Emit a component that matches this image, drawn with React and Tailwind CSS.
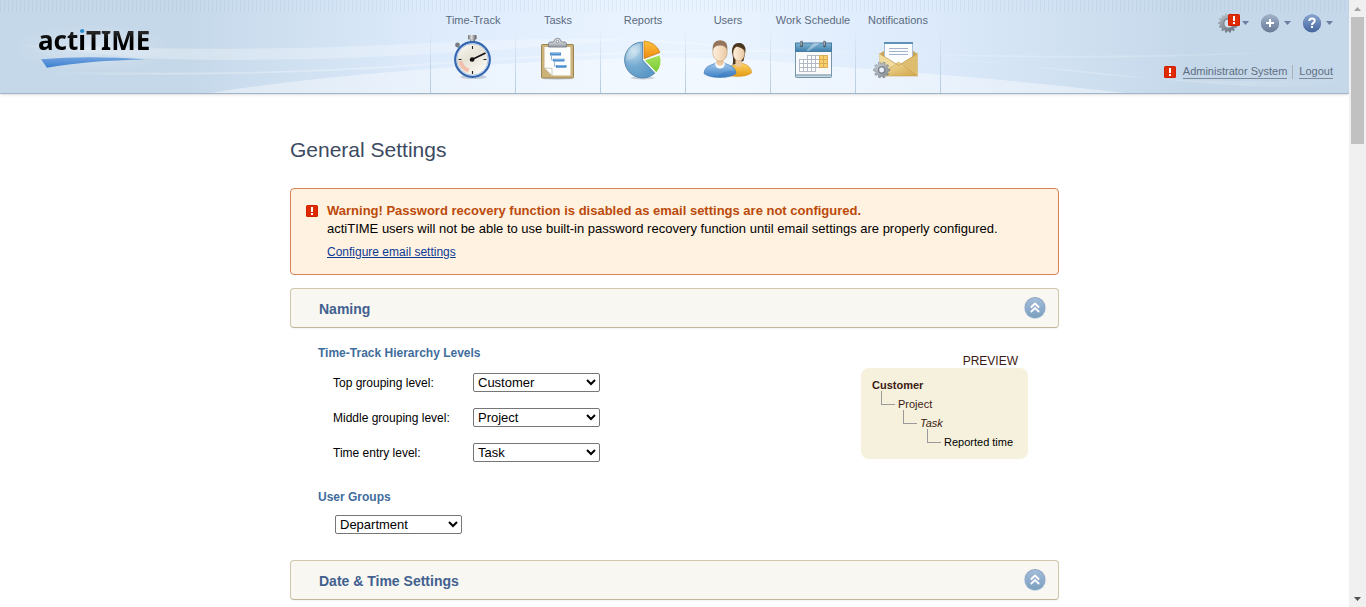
import React from "react";

const calendarCells = [];
for (let row = 0; row < 4; row++) {
  for (let col = 0; col < 7; col++) {
    if ((row === 0 && col < 2) || (row === 3 && col > 3)) continue;
    calendarCells.push({ x: 11 + col * 4, y: 21 + row * 4, weekend: col > 4 });
  }
}

function gearPath(cx, cy, outer, inner, teeth) {
  const points = [];
  const step = (Math.PI * 2) / teeth;
  for (let i = 0; i < teeth; i++) {
    const a = i * step;
    [
      [inner, -0.32],
      [outer, -0.2],
      [outer, 0.2],
      [inner, 0.32],
    ].forEach(([r, t]) => {
      points.push(
        (cx + r * Math.cos(a + t * step)).toFixed(2) + " " + (cy + r * Math.sin(a + t * step)).toFixed(2)
      );
    });
  }
  return "M" + points.join("L") + "Z";
}

function StopwatchIcon() {
  return (
    <svg viewBox="0 0 50 48" className="h-12 w-[50px]" aria-hidden="true">
      <defs>
        <linearGradient id="swFace" x1="0" y1="0" x2="0.6" y2="1">
          <stop offset="0" stopColor="#fffefa" />
          <stop offset="0.5" stopColor="#e6e3d6" />
          <stop offset="1" stopColor="#fbfaf4" />
        </linearGradient>
        <linearGradient id="swMetal" x1="0" x2="1">
          <stop offset="0" stopColor="#6d6d6d" />
          <stop offset="0.4" stopColor="#dedede" />
          <stop offset="1" stopColor="#555" />
        </linearGradient>
      </defs>
      <ellipse cx="25.5" cy="43" rx="13" ry="2" fill="#9aa7b5" opacity="0.5" />
      <rect x="22" y="4" width="5" height="5" fill="url(#swMetal)" />
      <rect x="20" y="1" width="8.500" height="4.500" rx="0.800" fill="url(#swMetal)" />
      <circle cx="9.500" cy="11" r="2.400" fill="#777c82" />
      <path d="M10 12L13 15" stroke="#8b8f94" strokeWidth="2" />
      <circle cx="24.500" cy="25.500" r="17.300" fill="url(#swFace)" stroke="#3567b0" strokeWidth="2.200" />
      <circle cx="24.500" cy="25.500" r="15.700" fill="none" stroke="#a9c4e6" strokeWidth="0.900" />
      <path d="M10.500 27A14 14 0 0 0 20 38.500L21.500 34.500A10 10 0 0 1 14.500 27Z" fill="#f4b9a4" opacity="0.850" />
      <path d="M24.500 12v3M24.500 37v3M10.500 25.500h3M35.500 25.500h3" stroke="#222" strokeWidth="1.100" />
      <path d="M22 26.500L37.500 19" stroke="#111" strokeWidth="1.500" />
      <circle cx="24.200" cy="25.500" r="2.300" fill="#111" />
    </svg>
  );
}

function TasksIcon() {
  return (
    <svg viewBox="0 0 50 48" className="h-12 w-[50px]" aria-hidden="true">
      <defs>
        <linearGradient id="clipMetal" x1="0" y1="0" x2="0" y2="1">
          <stop offset="0" stopColor="#fafafa" />
          <stop offset="1" stopColor="#969ca3" />
        </linearGradient>
      </defs>
      <ellipse cx="24.500" cy="44.500" rx="15" ry="1.200" fill="#9aa7b5" opacity="0.500" />
      <rect x="8.500" y="10.500" width="32" height="33.500" rx="0.800" fill="#cbb278" stroke="#9c8453" />
      <path d="M11.500 13H37.500V41.500H19L11.500 34Z" fill="#fcfcfd" />
      <path d="M11.500 34L19 34.500L19 41.500Z" fill="#fff" stroke="#b9b39c" strokeWidth="0.700" />
      <path d="M17 20h11M20 26.200h11.500M23 32.300h10.500" stroke="#4b8ccc" strokeWidth="2.800" />
      <path d="M18 19.300h9M21 25.500h9.500M24 31.600h8.500" stroke="#8dbce8" strokeWidth="0.800" />
      <path d="M18.500 21.500v4.500H20M21.500 27.700v4.500H23" fill="none" stroke="#8bb0d4" strokeWidth="0.900" />
      <path d="M15.500 13V9.500Q15.500 8 18 8H20.500Q21.500 4.300 24.500 4.300T28.500 8H31Q33.500 8 33.500 9.500V13Z" fill="url(#clipMetal)" stroke="#767d86" strokeWidth="0.900" />
      <circle cx="24.500" cy="7.500" r="1.300" fill="#fff" stroke="#777f88" strokeWidth="0.800" />
    </svg>
  );
}

function ReportsIcon() {
  return (
    <svg viewBox="0 0 50 48" className="h-12 w-[50px]" aria-hidden="true">
      <defs>
        <radialGradient id="pieBlue" cx="0.300" cy="0.250" r="0.800">
          <stop offset="0" stopColor="#c5dfef" />
          <stop offset="0.550" stopColor="#73a9cf" />
          <stop offset="1" stopColor="#5b98c8" />
        </radialGradient>
        <linearGradient id="pieOrange" x1="0" y1="0" x2="0" y2="1">
          <stop offset="0" stopColor="#ffc13c" />
          <stop offset="1" stopColor="#ee8a13" />
        </linearGradient>
        <linearGradient id="pieGreen" x1="0" y1="0" x2="0" y2="1">
          <stop offset="0" stopColor="#a6e35e" />
          <stop offset="1" stopColor="#78c832" />
        </linearGradient>
      </defs>
      <ellipse cx="24.500" cy="44" rx="12" ry="1.500" fill="#9aa7b5" opacity="0.500" />
      <path d="M24.500 26V8A18 18 0 1 0 36.800 39.200Z" fill="url(#pieBlue)" stroke="#4c7ca5" strokeWidth="0.800" />
      <path d="M22 10A15.500 15.500 0 0 0 8.500 27Q17 25 22 18Z" fill="#fff" opacity="0.220" />
      <path d="M26 24.700V7A18 18 0 0 1 42 18.500Z" fill="url(#pieOrange)" stroke="#c67a16" strokeWidth="0.700" />
      <path d="M26.300 26L42 20.800A18 18 0 0 1 38.300 38.800Z" fill="url(#pieGreen)" stroke="#fff" strokeWidth="0.900" />
    </svg>
  );
}

function UsersIcon() {
  return (
    <svg viewBox="0 0 50 48" className="h-12 w-[50px]" aria-hidden="true">
      <defs>
        <linearGradient id="skin" x1="0" x2="1">
          <stop offset="0" stopColor="#fff0df" />
          <stop offset="1" stopColor="#e9c9a4" />
        </linearGradient>
        <linearGradient id="shirtBlue" x1="0" y1="0" x2="0" y2="1">
          <stop offset="0" stopColor="#a3c9ee" />
          <stop offset="1" stopColor="#3c7fc4" />
        </linearGradient>
        <linearGradient id="shirtGold" x1="0" y1="0" x2="0" y2="1">
          <stop offset="0" stopColor="#fcd26a" />
          <stop offset="1" stopColor="#e59c10" />
        </linearGradient>
      </defs>
      <path d="M29.500 31Q31 24 28.800 18Q29 9 35.800 9T42.500 17L40.500 27Z" fill="#4a3721" />
      <path d="M22 41.500Q24 31 32 31L39 29Q49 32 48.500 39Q44 42.500 34 42.500Z" fill="url(#shirtGold)" stroke="#cb8c1d" strokeWidth="0.500" />
      <path d="M32.500 26H38.500V31Q36 35 32.500 31Z" fill="#ebc79f" />
      <ellipse cx="35.800" cy="19.500" rx="5.700" ry="7.500" fill="url(#skin)" stroke="#c49a68" strokeWidth="0.500" />
      <path d="M29.800 18Q30 12.500 34 12.500Q38 13.500 42 16.500Q42.500 9.500 36 9.200Q29 9.500 29.800 18Z" fill="#4a3721" />
      <path d="M1 39.500Q1.500 33 8 31L13 29H21L26 31Q32.500 33 33 39.500Q28 43.500 17 43.500T1 39.500Z" fill="url(#shirtBlue)" stroke="#3c76b2" strokeWidth="0.600" />
      <path d="M15 42.500Q21 36 32.500 37V39.500Q27 43 15 42.500Z" fill="#2d6db4" opacity="0.300" />
      <path d="M12 29L22 29L21 33Q17 36 13 33Z" fill="#fafbfd" />
      <path d="M13.500 24H20.500V30Q17 33.500 13.500 30Z" fill="#edc9a2" />
      <ellipse cx="17" cy="18" rx="7.200" ry="9.300" fill="url(#skin)" stroke="#c49a68" strokeWidth="0.600" />
      <path d="M9.700 17Q8.500 6.500 17 6.300T24.300 17Q23.500 11.500 17 11.500T9.700 17Z" fill="#94745a" />
    </svg>
  );
}

function ScheduleIcon() {
  return (
    <svg viewBox="0 0 50 48" className="h-12 w-[50px]" aria-hidden="true">
      <defs>
        <linearGradient id="calTop" x1="0" y1="0" x2="0" y2="1">
          <stop offset="0" stopColor="#83b5d3" />
          <stop offset="1" stopColor="#3d7fae" />
        </linearGradient>
      </defs>
      <rect x="7.500" y="14" width="36" height="29.500" rx="0.800" fill="#c9d7e1" stroke="#7795ab" />
      <rect x="8" y="15" width="35" height="25.500" fill="#f9f9f9" />
      <path d="M7.500 41H43.500" stroke="#7694ab" />
      <rect x="7.500" y="9" width="36" height="8.500" fill="url(#calTop)" stroke="#477ba1" />
      <path d="M18 17L26 9H32L21 17Z" fill="#fff" opacity="0.350" />
      <path d="M13.500 8v4M36.500 8v4" stroke="#4a555f" strokeWidth="2.600" strokeLinecap="round" />
      <path d="M13.200 7.500v4M36.200 7.500v4" stroke="#c6ced5" strokeWidth="1" />
      {calendarCells.map((c) => (
        <rect
          key={c.x + "-" + c.y}
          x={c.x + 0.5}
          y={c.y + 0.5}
          width="4"
          height="4"
          fill={c.weekend ? "#f9cf69" : "#fff"}
          stroke={c.weekend ? "#d7aa55" : "#b0b5c4"}
          strokeWidth="0.900"
        />
      ))}
    </svg>
  );
}

function NotificationsIcon() {
  return (
    <svg viewBox="0 0 50 48" className="h-12 w-[50px]" aria-hidden="true">
      <defs>
        <linearGradient id="env" x1="0" y1="0" x2="1" y2="1">
          <stop offset="0" stopColor="#f5e0a1" />
          <stop offset="1" stopColor="#d2a74c" />
        </linearGradient>
        <linearGradient id="smallGear" x1="0" y1="0" x2="1" y2="1">
          <stop offset="0" stopColor="#d6dade" />
          <stop offset="1" stopColor="#7d858e" />
        </linearGradient>
      </defs>
      <path d="M6.500 20L12 16H39L44.500 20V42H6.500Z" fill="#c9a65b" />
      <rect x="11.500" y="8.500" width="28" height="24" fill="#fbfcfe" stroke="#a9bdd2" />
      <path d="M11 9H40" stroke="#5c91b8" strokeWidth="2" />
      <path d="M16 14.500H35M16 17.500H35M16 20.500H35" stroke="#a4b3cd" strokeWidth="1.100" />
      <path d="M6.500 19.500L23 30L6.500 41.500Z" fill="#f1dca0" />
      <path d="M44.500 19.500L28 30L44.500 41.500Z" fill="#dfbd6e" />
      <path d="M6.500 42L25.500 28L44.500 42Z" fill="url(#env)" stroke="#c9a35a" strokeWidth="0.600" />
      <path d="M6.500 19.500L25.500 31.500L44.500 19.500" fill="none" stroke="#c39c4d" strokeWidth="0.800" />
      <path d={gearPath(8.7, 36, 8, 6, 10)} fill="url(#smallGear)" stroke="#757d86" strokeWidth="0.600" />
      <circle cx="8.700" cy="36" r="3.500" fill="none" stroke="#69717a" strokeWidth="0.900" />
      <circle cx="8.700" cy="36" r="2.300" fill="#edf3fa" />
    </svg>
  );
}

function AlertBadge({ className = "" }) {
  return (
    <svg viewBox="0 0 12 12" className={"h-3 w-3 shrink-0 " + className} aria-hidden="true">
      <rect width="12" height="12" rx="1.500" fill="#d21f04" />
      <rect x="1" y="1" width="10" height="10" rx="1" fill="#e02c05" />
      <rect x="5" y="2" width="2" height="5" fill="#fff" />
      <rect x="5" y="8" width="2" height="2" fill="#fff" />
    </svg>
  );
}

function Caret() {
  return (
    <svg viewBox="0 0 7 4" className="h-1 w-[7px]" aria-hidden="true">
      <path d="M0 0H7L3.500 4Z" fill="#6a7ea2" />
    </svg>
  );
}

function GearIcon() {
  return (
    <svg viewBox="0 0 20 20" className="h-5 w-5" aria-hidden="true">
      <defs>
        <linearGradient id="bigGear" x1="0" y1="0" x2="0.400" y2="1">
          <stop offset="0" stopColor="#c0c7cf" />
          <stop offset="1" stopColor="#717b88" />
        </linearGradient>
      </defs>
      <path d={gearPath(10, 10, 9.8, 8.2, 14)} fill="url(#bigGear)" />
      <circle cx="10" cy="10" r="5" fill="#7d8997" />
      <circle cx="10.500" cy="10.500" r="4" fill="#d3e1ee" />
    </svg>
  );
}

function PlusIcon() {
  return (
    <svg viewBox="0 0 20 20" className="h-5 w-5" aria-hidden="true">
      <defs>
        <linearGradient id="plusFill" x1="0" y1="0" x2="0" y2="1">
          <stop offset="0" stopColor="#a1b2c9" />
          <stop offset="1" stopColor="#6a7c99" />
        </linearGradient>
      </defs>
      <circle cx="10" cy="10.500" r="9" fill="#6b7c96" />
      <circle cx="10" cy="10" r="8.800" fill="url(#plusFill)" />
      <path d="M10 6v8M6 10h8" stroke="#fff" strokeWidth="2" />
    </svg>
  );
}

function HelpIcon() {
  return (
    <svg viewBox="0 0 20 20" className="h-5 w-5" aria-hidden="true">
      <defs>
        <linearGradient id="helpFill" x1="0" y1="0" x2="0" y2="1">
          <stop offset="0" stopColor="#88a4d0" />
          <stop offset="1" stopColor="#4668a2" />
        </linearGradient>
      </defs>
      <circle cx="10" cy="10.500" r="9" fill="#4a6797" />
      <circle cx="10" cy="10" r="8.800" fill="url(#helpFill)" />
      <path d="M7.300 8Q7.300 5.500 10 5.500T12.700 7.800Q12.700 9.300 11.200 10Q10 10.600 10 12" fill="none" stroke="#fff" strokeWidth="2" />
      <rect x="9" y="13" width="2" height="2" fill="#fff" />
    </svg>
  );
}

function HeaderWaves() {
  return (
    <svg
      viewBox="0 0 1349 93"
      preserveAspectRatio="none"
      className="pointer-events-none absolute inset-0 h-full w-full"
      aria-hidden="true"
    >
      <defs>
        <linearGradient id="waveFade" x1="0" x2="1">
          <stop offset="0" stopColor="#fff" stopOpacity="0" />
          <stop offset="0.120" stopColor="#fff" stopOpacity="0.280" />
          <stop offset="0.880" stopColor="#fff" stopOpacity="0.200" />
          <stop offset="1" stopColor="#fff" stopOpacity="0" />
        </linearGradient>
        <radialGradient id="logoGlow">
          <stop offset="0" stopColor="#fff" stopOpacity="0.300" />
          <stop offset="1" stopColor="#fff" stopOpacity="0" />
        </radialGradient>
      </defs>
      <ellipse cx="93" cy="48" rx="80" ry="24" fill="url(#logoGlow)" />
      <path d="M0 44Q230 54 430 43T760 49Q1080 62 1310 50Q1150 62 940 55T620 40Q330 66 140 58Z" fill="url(#waveFade)" />
      <path d="M40 71Q250 77 430 63T760 50Q950 56 1130 76T1349 79Q1180 86 1060 70T760 52Q600 52 430 65T40 74Z" fill="url(#waveFade)" />
      <path d="M210 93Q330 74 520 63T800 64Q990 77 1125 93Z" fill="#fff" opacity="0.400" />
    </svg>
  );
}

const navItems = [
  { label: "Time-Track", Icon: StopwatchIcon },
  { label: "Tasks", Icon: TasksIcon },
  { label: "Reports", Icon: ReportsIcon },
  { label: "Users", Icon: UsersIcon },
  { label: "Work Schedule", Icon: ScheduleIcon },
  { label: "Notifications", Icon: NotificationsIcon },
];

function NavDivider() {
  return <span className="mt-7 w-px bg-linear-to-b from-[#b9cfe3]/0 to-[#b3cade]" />;
}

function Header() {
  return (
    <header className="relative flex h-[94px] border-b border-[#a3b5c8] bg-[linear-gradient(90deg,#c5d8e9_0%,#c5d8e9_14%,#dceafb_31%,#e9f3ff_46%,#e9f3ff_54%,#dceafb_69%,#c5d8e9_88%,#c5d8e9_100%)] shadow-sm">
      <HeaderWaves />
      <div className="pointer-events-none absolute inset-x-0 top-0 h-3 bg-[repeating-linear-gradient(90deg,rgba(130,165,200,0.12)_0px,rgba(130,165,200,0.12)_1px,transparent_1px,transparent_4px)]" />
      <div className="relative flex-1 pt-[22px] pl-[38px]">
        <a href="#home" className="inline-flex flex-col font-['Noto_Sans',sans-serif] text-[26px] leading-9 font-bold">
          <span>
            <span className="bg-linear-to-b from-[#555] to-black to-70% bg-clip-text text-transparent">act</span>
            <span className="bg-linear-to-b from-[#2c8ccc] from-35% to-black to-35% bg-clip-text text-transparent">i</span>
            <span className="bg-linear-to-b from-[#555] to-black to-70% bg-clip-text text-transparent">TIME</span>
          </span>
          <svg viewBox="0 0 109 14" className="-mt-1 h-[14px] w-[109px]" aria-hidden="true">
            <defs>
              <linearGradient id="swoosh" x1="0" y1="0" x2="0" y2="1">
                <stop offset="0" stopColor="#72a3df" />
                <stop offset="1" stopColor="#3b7fd0" />
              </linearGradient>
            </defs>
            <path d="M3 5.200Q50 1 108 5.500Q50 6.500 9 13.700Z" fill="url(#swoosh)" />
          </svg>
        </a>
      </div>
      <nav aria-label="Main" className="relative flex">
        {navItems.map(({ label, Icon }) => (
          <React.Fragment key={label}>
            <NavDivider />
            <a
              href="#nav"
              className="flex w-[84px] flex-col items-center pt-3 text-[11px] leading-4 whitespace-nowrap text-[#5b6b80]"
            >
              <span>{label}</span>
              <span className="mt-[6px]">
                <Icon />
              </span>
            </a>
          </React.Fragment>
        ))}
        <NavDivider />
      </nav>
      <div className="relative flex flex-1 flex-col items-end pt-[13px] pr-4">
        <div className="flex gap-[11px]">
          <button type="button" aria-label="Settings" className="relative flex items-center gap-1">
            <GearIcon />
            <AlertBadge className="absolute top-px left-[10px]" />
            <Caret />
          </button>
          <button type="button" aria-label="Add" className="flex items-center gap-1">
            <PlusIcon />
            <Caret />
          </button>
          <button type="button" aria-label="Help" className="flex items-center gap-1">
            <HelpIcon />
            <Caret />
          </button>
        </div>
        <div className="mt-8 flex items-center text-[11px] leading-[13px] whitespace-nowrap text-[#5f6e82]">
          <AlertBadge className="mr-[7px]" />
          <a href="#profile" className="border-b border-[#7d8b9d]">
            Administrator System
          </a>
          <span className="mr-[6px] ml-[5px] h-[14px] w-px bg-[#b3afae]" />
          <a href="#logout" className="border-b border-[#7d8b9d]">
            Logout
          </a>
        </div>
      </div>
    </header>
  );
}

function SectionHeader({ title }) {
  return (
    <div className="flex h-10 items-center justify-between rounded border border-[#d0c6ac] border-b-[#bfb598] bg-[#f8f7f2] pr-3 pl-7 shadow-xs">
      <h2 className="pt-[2px] text-sm leading-5 font-bold text-[#42618f]">{title}</h2>
      <button type="button" aria-label={"Collapse " + title} className="h-[22px] w-[22px]">
        <svg viewBox="0 0 22 22" className="h-full w-full" aria-hidden="true">
          <defs>
            <linearGradient id="collapseFill" x1="0" y1="0" x2="0" y2="1">
              <stop offset="0" stopColor="#a4bcdb" />
              <stop offset="1" stopColor="#7a9fbe" />
            </linearGradient>
          </defs>
          <circle cx="11" cy="11" r="11" fill="#d5dfe7" />
          <circle cx="11" cy="10.500" r="10.200" fill="#7589a5" />
          <circle cx="11" cy="11" r="10.200" fill="url(#collapseFill)" />
          <path d="M6.800 10.500L11 6.500L15.200 10.500M6.800 15L11 11L15.200 15" fill="none" stroke="#fff" strokeWidth="1.800" />
        </svg>
      </button>
    </div>
  );
}

const selectClass = "h-[19px] w-[127px] rounded-[2px] border border-[#767676] bg-white text-[13px] text-black";

const levels = [
  { id: "top", label: "Top grouping level:", options: ["Customer", "Client", "Department"] },
  { id: "middle", label: "Middle grouping level:", options: ["Project", "Product", "Job"] },
  { id: "entry", label: "Time entry level:", options: ["Task", "Activity", "Work"] },
];

function Select({ id, options, label }) {
  return (
    <select id={id} aria-label={label} className={selectClass}>
      {options.map((o) => (
        <option key={o}>{o}</option>
      ))}
    </select>
  );
}

function Elbow() {
  return <span className="-mt-1 mr-[3px] h-[14px] w-[14px] shrink-0 self-start border-b border-l border-[#9a9a9a]" />;
}

function Preview() {
  return (
    <div className="mt-[9px] mr-[31px] w-[167px]">
      <p className="pt-px pr-[10px] text-right text-xs leading-[14px] text-[#3b1a14]">PREVIEW</p>
      <ul className="rounded-lg bg-[#f6f1dc] pt-2 pb-[7px] text-[11px] text-[#3b1a14]">
        <li className="flex h-[19px] items-center pl-[11px] font-bold">Customer</li>
        <li className="flex h-[19px] items-center pl-5">
          <Elbow />
          Project
        </li>
        <li className="flex h-[19px] items-center pl-[42px] italic">
          <Elbow />
          Task
        </li>
        <li className="flex h-[19px] items-center pl-[66px] text-black">
          <Elbow />
          Reported time
        </li>
      </ul>
    </div>
  );
}

function Scrollbar() {
  return (
    <div className="sticky top-0 flex h-screen w-[17px] shrink-0 flex-col items-center bg-[#f0f0f0]" aria-hidden="true">
      <span className="flex h-[17px] items-center">
        <svg viewBox="0 0 7 4" className="h-1 w-[7px]">
          <path d="M0 4H7L3.500 0Z" fill="#a3a3a3" />
        </svg>
      </span>
      <span className="h-[127px] w-[13px] bg-[#c1c1c1]" />
      <span className="mt-auto flex h-[17px] items-center">
        <svg viewBox="0 0 7 4" className="h-1 w-[7px]">
          <path d="M0 0H7L3.500 4Z" fill="#505050" />
        </svg>
      </span>
    </div>
  );
}

export default function App() {
  return (
    <div className="flex min-h-screen bg-white font-['Liberation_Sans',Arial,sans-serif] text-black">
      <div className="min-w-0 flex-1">
        <Header />
        <main className="mx-auto max-w-[769px] pt-[43px]">
          <h1 className="text-[21px] leading-[26px] text-[#3c4a61]">General Settings</h1>

          <section className="mt-[25px] flex gap-[9px] rounded border border-[#d9835b] bg-[#fff2e1] px-[15px] pt-[13px] pb-[13px]">
            <AlertBadge className="mt-[3px]" />
            <div>
              <p className="text-[13px] leading-[18px] font-bold text-[#bb4a0b]">
                Warning! Password recovery function is disabled as email settings are not configured.
              </p>
              <p className="text-[13px] leading-[18px]">
                actiTIME users will not be able to use built-in password recovery function until email settings are
                properly configured.
              </p>
              <a href="#email" className="mt-[5px] block w-fit text-xs leading-[18px] text-[#0d3a94] underline">
                Configure email settings
              </a>
            </div>
          </section>

          <div className="mt-[13px]">
            <SectionHeader title="Naming" />
          </div>

          <div className="flex items-start justify-between pb-[26px]">
            <div className="pt-4 pl-7">
              <h3 className="text-xs leading-[18px] font-bold text-[#3f6d9c]">Time-Track Hierarchy Levels</h3>
              <div className="mt-[11px] flex flex-col gap-4 pl-[15px]">
                {levels.map((l) => (
                  <div key={l.id} className="flex h-[19px] items-center">
                    <label htmlFor={l.id} className="w-[140px] text-xs leading-5">
                      {l.label}
                    </label>
                    <Select id={l.id} options={l.options} />
                  </div>
                ))}
              </div>
              <h3 className="mt-[26px] text-xs leading-[18px] font-bold text-[#3f6d9c]">User Groups</h3>
              <div className="mt-[9px] flex pl-[17px]">
                <Select id="groups" label="User Groups" options={["Department", "Team", "Group"]} />
              </div>
            </div>
            <div className="pt-4">
              <Preview />
            </div>
          </div>

          <SectionHeader title="Date &amp; Time Settings" />
        </main>
      </div>
      <Scrollbar />
    </div>
  );
}
